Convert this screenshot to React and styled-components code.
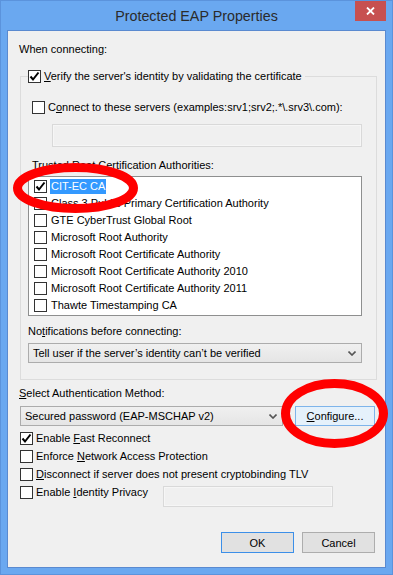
import styled, { createGlobalStyle } from "styled-components";

const GlobalStyle = createGlobalStyle`
  html, body { margin: 0; padding: 0; background: #ffffff; }
  body { font-family: "Liberation Sans", Arial, sans-serif; font-size: 11px; color: #000; }
  * { box-sizing: border-box; }
`;

const Window = styled.div`
  position: relative;
  width: 393px;
  height: 575px;
  background: #6aa8f0;
  border: 1px solid #5b93dc;
  display: flex;
  flex-direction: column;
  overflow: hidden;
`;

const TitleBar = styled.div`
  height: 29px;
  display: grid;
  grid-template-columns: 1fr auto 1fr;
  align-items: start;
`;

const Title = styled.div`
  grid-column: 2;
  padding-top: 6px;
  font-size: 14.3px;
  line-height: 18px;
  color: #2b2b2b;
  white-space: nowrap;
`;

const CloseButton = styled.div`
  grid-column: 3;
  justify-self: end;
  margin-top: -1px;
  margin-right: 6px;
  width: 31px;
  height: 21px;
  background: #c75050;
  display: flex;
  align-items: center;
  justify-content: center;
`;

const Client = styled.div`
  flex: 1;
  margin: 0 6px 6px 6px;
  background: #f0f0f0;
  border: 1px solid #5a8ad0;
  padding: 10px 10px 14px 11px;
  display: flex;
  flex-direction: column;
  align-items: flex-start;
`;

const Label = styled.div`
  line-height: 16px;
  height: 16px;
  margin-top: ${(p) => p.$top || 0}px;
  margin-left: ${(p) => p.$left || 0}px;
  white-space: nowrap;
`;

const Key = styled.span`
  text-decoration: underline;
`;

const GroupBox = styled.fieldset`
  margin: 11px 0 0 1px;
  width: 357px;
  border: 1px solid #dcdcdc;
  padding: 0 14px 16px 7px;
  min-width: 0;
  display: flex;
  flex-direction: column;
  align-items: flex-start;
`;

const Legend = styled.legend`
  padding: 0 3px 0 0;
  height: 16px;
  line-height: 16px;
  display: flex;
  align-items: center;
  gap: 3px;
  white-space: nowrap;
`;

const CheckRow = styled.label`
  display: flex;
  align-items: center;
  gap: ${(p) => p.$gap ?? 3}px;
  height: ${(p) => p.$height || 16}px;
  margin-top: ${(p) => p.$top || 0}px;
  margin-left: ${(p) => p.$left || 0}px;
  white-space: nowrap;
  flex-shrink: 0;
`;

const BoxFrame = styled.span`
  width: 13px;
  height: 13px;
  flex-shrink: 0;
  border: 1px solid #333;
  background: #fff;
  display: flex;
  align-items: center;
  justify-content: center;
`;

const TextField = styled.div`
  width: ${(p) => p.$width}px;
  height: ${(p) => p.$height}px;
  margin-top: ${(p) => p.$top || 0}px;
  margin-left: ${(p) => p.$left || 0}px;
  border: 1px solid #d9d9d9;
  box-shadow: inset 0 0 0 1px #f6f6f6;
  background: #f0f0f0;
  flex-shrink: 0;
`;

const ListBox = styled.div`
  margin-top: 3px;
  width: 334px;
  height: 140px;
  border: 1px solid #8e8f8f;
  background: #fff;
  padding: 1px 0 0 5px;
`;

const ListRow = styled.div`
  height: 17px;
  display: flex;
  align-items: center;
  gap: 3px;
  white-space: nowrap;
`;

const ItemText = styled.span`
  padding: 0 1px;
  height: 15px;
  line-height: 15px;
  background: ${(p) => (p.$selected ? "#3399ff" : "transparent")};
  color: ${(p) => (p.$selected ? "#fff" : "#000")};
`;

const Combo = styled.div`
  width: ${(p) => p.$width}px;
  height: 20px;
  margin-top: ${(p) => p.$top || 0}px;
  border: 1px solid #acacac;
  background: linear-gradient(#f0f0f0, #e5e5e5);
  display: flex;
  align-items: center;
  justify-content: space-between;
  padding: 0 5px 0 4px;
  white-space: nowrap;
  flex-shrink: 0;
`;

const AuthRow = styled.div`
  margin-top: 5px;
  margin-left: 1px;
  display: flex;
  gap: 12px;
`;

const Button = styled.button`
  width: ${(p) => p.$width}px;
  height: ${(p) => p.$height || 21}px;
  font: inherit;
  font-size: 11px;
  color: #000;
  padding: 0;
  border: 1px solid
    ${(p) => (p.$variant === "hot" ? "#7eb4ea" : p.$variant === "default" ? "#3c8fe8" : "#adadad")};
  background: ${(p) => (p.$variant === "hot" ? "#e5f1fb" : "#e1e1e1")};
  box-shadow: ${(p) => (p.$variant === "default" ? "inset 0 0 0 1px #e1e1e1" : "none")};
`;

const CheckList = styled.div`
  margin-top: 3px;
  margin-left: 1px;
  display: flex;
  flex-direction: column;
`;

const IdentityRow = styled.div`
  display: flex;
  align-items: flex-start;
`;

const IdentityLabel = styled(CheckRow)`
  width: 143px;
`;

const ButtonBar = styled.div`
  margin-top: auto;
  align-self: flex-end;
  display: flex;
  gap: 8px;
`;

const Overlay = styled.svg`
  position: absolute;
  left: -1px;
  top: -1px;
  pointer-events: none;
`;

function CheckBox({ checked }) {
  return (
    <BoxFrame>
      {checked && (
        <svg width="11" height="11" viewBox="0 0 11 11">
          <path d="M1.5 5.5 L4 8.5 L9.5 1.5" fill="none" stroke="#000" strokeWidth="2" />
        </svg>
      )}
    </BoxFrame>
  );
}

function Chevron() {
  return (
    <svg width="8" height="5" viewBox="0 0 8 5">
      <path d="M0.5 0.5 L4 4 L7.5 0.5" fill="none" stroke="#555" strokeWidth="1.6" />
    </svg>
  );
}

const authorities = [
  "CIT-EC CA",
  "Class 3 Public Primary Certification Authority",
  "GTE CyberTrust Global Root",
  "Microsoft Root Authority",
  "Microsoft Root Certificate Authority",
  "Microsoft Root Certificate Authority 2010",
  "Microsoft Root Certificate Authority 2011",
  "Thawte Timestamping CA",
];

export default function App() {
  return (
    <>
      <GlobalStyle />
      <Window>
        <TitleBar>
          <Title>Protected EAP Properties</Title>
          <CloseButton>
            <svg width="9" height="8" viewBox="0 0 9 8">
              <path d="M1 0.5 L8 7.5 M8 0.5 L1 7.5" stroke="#fff" strokeWidth="1.8" />
            </svg>
          </CloseButton>
        </TitleBar>

        <Client>
          <Label>When connecting:</Label>

          <GroupBox>
            <Legend>
              <CheckBox checked />
              <span>
                <Key>V</Key>erify the server's identity by validating the certificate
              </span>
            </Legend>

            <CheckRow $top={15} $left={4}>
              <CheckBox />
              <span>
                C<Key>o</Key>nnect to these servers (examples:srv1;srv2;.*\.srv3\.com):
              </span>
            </CheckRow>

            <TextField $width={310} $height={23} $top={9} $left={24} />

            <Label $top={10} $left={4}>
              Trusted <Key>R</Key>oot Certification Authorities:
            </Label>

            <ListBox>
              {authorities.map((name, i) => (
                <ListRow key={name}>
                  <CheckBox checked={i === 0} />
                  <ItemText $selected={i === 0}>{name}</ItemText>
                </ListRow>
              ))}
            </ListBox>

            <Label $top={7}>
              No<Key>t</Key>ifications before connecting:
            </Label>

            <Combo $width={334} $top={4}>
              <span>Tell user if the server’s identity can’t be verified</span>
              <Chevron />
            </Combo>
          </GroupBox>

          <Label $top={5}>
            <Key>S</Key>elect Authentication Method:
          </Label>

          <AuthRow>
            <Combo $width={263}>
              <span>Secured password (EAP-MSCHAP v2)</span>
              <Chevron />
            </Combo>
            <Button $width={80} $height={20} $variant="hot">
              <Key>C</Key>onfigure...
            </Button>
          </AuthRow>

          <CheckList>
            <CheckRow $height={18}>
              <CheckBox checked />
              <span>
                Enable <Key>F</Key>ast Reconnect
              </span>
            </CheckRow>
            <CheckRow $height={18}>
              <CheckBox />
              <span>
                Enforce <Key>N</Key>etwork Access Protection
              </span>
            </CheckRow>
            <CheckRow $height={18}>
              <CheckBox />
              <span>
                <Key>D</Key>isconnect if server does not present cryptobinding TLV
              </span>
            </CheckRow>
            <IdentityRow>
              <IdentityLabel $height={18}>
                <CheckBox />
                <span>
                  Enable <Key>I</Key>dentity Privacy
                </span>
              </IdentityLabel>
              <TextField $width={170} $height={21} $top={3} />
            </IdentityRow>
          </CheckList>

          <ButtonBar>
            <Button $width={73} $variant="default">OK</Button>
            <Button $width={73}>Cancel</Button>
          </ButtonBar>
        </Client>

        <Overlay width="393" height="575" viewBox="0 0 393 575">
          <ellipse cx="75.5" cy="188" rx="58" ry="20.5" fill="none" stroke="#ff0000" strokeWidth="9" />
          <ellipse cx="334.5" cy="413.5" rx="49" ry="30" fill="none" stroke="#ff0000" strokeWidth="9" />
        </Overlay>
      </Window>
    </>
  );
}
